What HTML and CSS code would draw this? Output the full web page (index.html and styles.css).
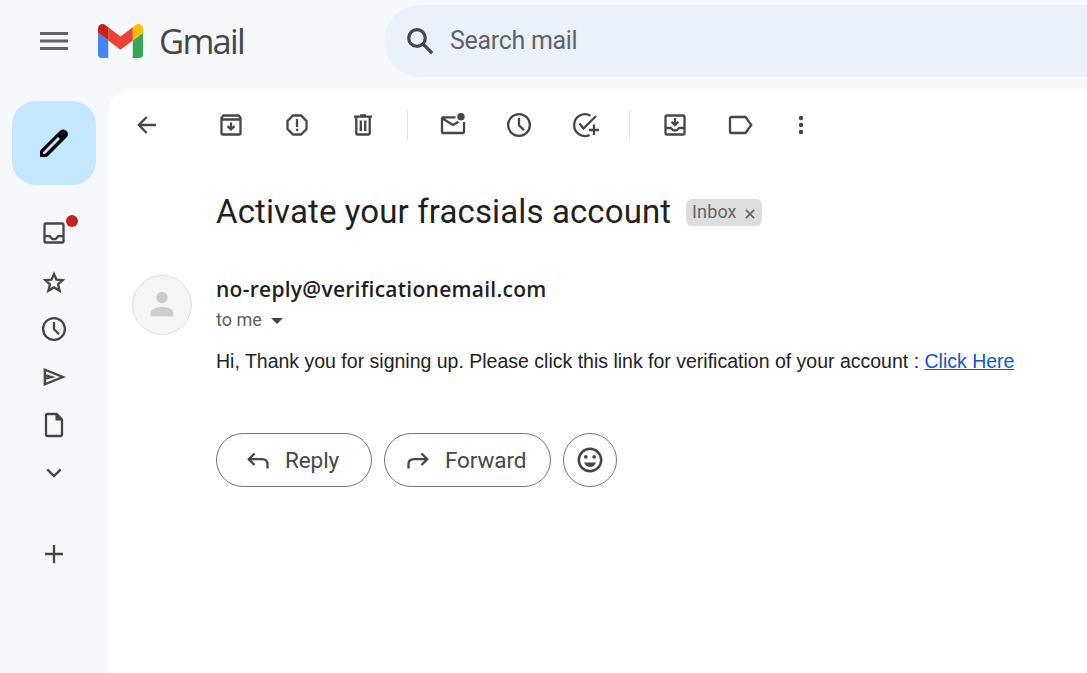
FILE: index.html
```html
<!DOCTYPE html>
<html lang="en">
<head>
<meta charset="utf-8">
<title>Gmail</title>
<link rel="stylesheet" href="styles.css">
</head>
<body>
<header class="topbar">
  <svg class="menu" viewBox="0 0 28 18"><path d="M0 0h28v3H0zM0 7.500h28v3H0zM0 15h28v3H0z"/></svg>
  <svg class="logo" viewBox="52 42 88 66">
    <path fill="#4285f4" d="M58 108h14V74L52 59v43c0 3.32 2.69 6 6 6"/>
    <path fill="#34a853" d="M120 108h14c3.32 0 6-2.69 6-6V59l-20 15"/>
    <path fill="#fbbc04" d="M120 48v26l20-15v-8c0-7.42-8.47-11.65-14.4-7.2"/>
    <path fill="#ea4335" d="M72 74V48l24 18 24-18v26L96 92"/>
    <path fill="#c5221f" d="M52 51v8l20 15V48l-5.6-4.2c-5.94-4.45-14.4-.22-14.4 7.2"/>
  </svg>
  <span class="brand">Gmail</span>
  <div class="search">
    <svg class="search-icon" viewBox="0 0 27 27"><circle cx="10" cy="10" r="8.3"/><path d="M16 16l9.2 9.2"/></svg>
    <span class="search-text">Search mail</span>
  </div>
</header>
<div class="layout">
  <nav class="rail">
    <div class="compose"><svg class="icon" viewBox="-15 -15 30 30"><path class="solid" fill-rule="evenodd" d="M-14 7.800L5.200-11.400Q8.800-15.200 12.200-12.200Q15.800-8.800 12.200-5.200L-7 14H-14ZM-11 9.200V11H-8.900L6-4L4-6Z"/></svg></div>
    <div class="nav-item"><svg class="icon" viewBox="-15 -15 30 30"><rect x="-9.500" y="-9.500" width="19" height="19" rx="1.500"/><path d="M-9.500 3.200H-4Q-2.500 6.200 0 6.200T4 3.200H9.500"/></svg><span class="badge"></span></div>
    <div class="nav-item"><svg class="icon" viewBox="-15 -16.500 30 30"><path d="M0-8.500L2.500-2.900L8.700-2.400L4 1.900L5.600 8.300L0 4.900L-5.600 8.300L-4 1.900L-8.700-2.400L-2.500-2.900Z"/></svg></div>
    <div class="nav-item"><svg class="icon" viewBox="-15 -15 30 30"><circle r="10.900"/><path d="M0-7V.3L5 5.200"/></svg></div>
    <div class="nav-item"><svg class="icon" viewBox="-15 -15 30 30"><path d="M-9.200-7.200V7.200L8.800 0ZM-8.500-1.700L-2.500 0L-8.500 1.700"/></svg></div>
    <div class="nav-item"><svg class="icon" viewBox="-15 -15 30 30"><path d="M2.500-11H-6.500Q-8-11-8-9.500V9.500Q-8 11-6.500 11H6.500Q8 11 8 9.500V-5Z"/><path class="solid" d="M1.500-12H3L9-6V-4.500H1.500Z"/></svg></div>
    <div class="nav-item"><svg class="icon" viewBox="-15 -15 30 30"><path d="M-6.700-3.600L0 3.100L6.700-3.600"/></svg></div>
    <div class="nav-item add"><svg class="icon" viewBox="-15 -15 30 30"><path d="M-9 0H9M0-9V9"/></svg></div>
  </nav>
  <main class="mail">
    <div class="toolbar">
      <div class="tool back"><svg class="icon" viewBox="-15 -15 30 30"><path d="M9 0H-7M-.3-8L-8.200 0L-.3 8"/></svg></div>
      <div class="tool"><svg class="icon" viewBox="-15 -15 30 30"><path d="M-9.500-7.200L-7.500-9.500H7.500L9.500-7.200V8Q9.500 9.500 8 9.500H-8Q-9.500 9.500-9.500 8ZM-9.500-5.500H9.500M0-2.500V4M-3.500 1.200L0 4.500L3.500 1.200"/></svg></div>
      <div class="tool"><svg class="icon" viewBox="-15 -15 30 30"><path d="M-4-9.500H4L9.500-4V4L4 9.500H-4L-9.500 4V-4ZM0-6V2M0 3.700V5.900"/></svg></div>
      <div class="tool"><svg class="icon" viewBox="-15 -15 30 30"><path d="M-9-8.300H9M-3-9.600H3M-6.700-8V8Q-6.700 9.500-5.200 9.500H5.200Q6.700 9.500 6.700 8V-8M-2.200-4.500V6M2.200-4.500V6"/></svg></div>
      <div class="separator"></div>
      <div class="tool"><svg class="icon" viewBox="-15 -15 30 30"><path d="M2.500-7.700H-10Q-11-7.700-11-6.700V7Q-11 8-10 8H10Q11 8 11 7V-3M-10.500-6.500L0 0L5.500-3.300"/><circle class="solid" cx="8" cy="-8.200" r="3.700"/></svg></div>
      <div class="tool"><svg class="icon" viewBox="-15 -15 30 30"><circle r="10.900"/><path d="M0-7V.3L5 5.200"/></svg></div>
      <div class="tool"><svg class="icon" viewBox="-15 -15 30 30"><path d="M5.500-9.300A10.900 10.900 0 1 0 4.700 10M-5.500-1.500L-1.500 3.500L11-9M9-.5V10M4 5H14"/></svg></div>
      <div class="separator"></div>
      <div class="tool"><svg class="icon" viewBox="-15 -15 30 30"><rect x="-9.500" y="-9.500" width="19" height="19" rx="1.500"/><path d="M-9.500 3H-4Q-2.500 5.500 0 5.500T4 3H9.500M0-7V0M-3.500-3.300L0 .2L3.500-3.300"/></svg></div>
      <div class="tool"><svg class="icon" viewBox="-15 -15 30 30"><path d="M-9.500-8H4.500L10.300 0L4.500 8H-9.500Q-11 8-11 6.500V-6.500Q-11-8-9.500-8Z"/></svg></div>
      <div class="tool more"><svg class="icon" viewBox="-15 -15 30 30"><g class="solid"><circle cy="-7" r="2.200"/><circle r="2.200"/><circle cy="7" r="2.200"/></g></svg></div>
    </div>
    <div class="subject">
      <h1 class="subject-text">Activate your fracsials account</h1>
      <span class="label"><span class="label-text">Inbox</span><svg class="label-close" viewBox="0 0 10 10"><path d="M.8.8l8.400 8.400M9.200.8L.8 9.200"/></svg></span>
    </div>
    <article class="message">
      <svg class="avatar" viewBox="0 0 60 60"><circle class="avatar-bg" cx="30" cy="30" r="29.500"/><circle class="person" cx="30" cy="22.500" r="5.700"/><path class="person" d="M18.700 41.300V38C18.700 30 41.300 30 41.300 38V41.300Z"/></svg>
      <div class="content">
        <div class="sender"><span>no-reply@verificationemail.com</span></div>
        <div class="recipient"><span class="to">to me</span><svg class="caret" viewBox="0 0 12 6"><path d="M0 0H12L6 6Z"/></svg></div>
        <p class="body-text"><span>Hi, Thank you for signing up. Please click this link for verification of your account : <a class="link" href="#">Click Here</a></span></p>
        <div class="actions">
          <div class="button reply"><svg class="icon" viewBox="-15 -15 30 30"><path d="M-3.500-6.500L-9.200-.8L-3.500 5M-9-.8H4Q9.500-.8 9.500 4.500V8.500"/></svg><span>Reply</span></div>
          <div class="button forward"><svg class="icon" viewBox="-15 -15 30 30"><path d="M3.500-6.500L9.200-.8L3.500 5M9-.8H-4Q-9.500-.8-9.500 4.500V8.500"/></svg><span>Forward</span></div>
          <div class="button emoji"><svg class="icon" viewBox="-15 -15 30 30"><circle class="face" r="11.200"/><g class="solid"><circle cx="-4.200" cy="-3.200" r="1.900"/><circle cx="4.200" cy="-3.200" r="1.900"/><path d="M-6 2.500H6Q4 7-0 7T-6 2.500Z"/></g></svg></div>
        </div>
      </div>
    </article>
  </main>
</div>
</body>
</html>
```
FILE: styles.css
```css
* { box-sizing: border-box; }
body {
  margin: 0;
  height: 673px;
  overflow: hidden;
  display: flex;
  flex-direction: column;
  background: #f6f8fc;
  color: #444746;
  font-family: Roboto, "Liberation Sans", sans-serif;
}
svg { display: block; flex: none; }
span, h1 { white-space: nowrap; }
.icon { width: 30px; height: 30px; fill: none; stroke: #444746; stroke-width: 2.3; }
.icon .solid { fill: #444746; stroke: none; }
.topbar { flex: none; height: 89px; display: flex; padding-left: 40px; }
.menu { width: 28px; height: 18px; margin-top: 32px; fill: #5f6368; }
.logo { width: 45px; height: 34px; margin: 24px 0 0 29.500px; }
.brand {
  width: 86px;
  margin: 19px 0 0 16.500px;
  font: 34.500px/44px "Open Sans", sans-serif;
  letter-spacing: -1.700px;
}
.search {
  flex: 1;
  height: 72px;
  margin: 5px 0 0 139px;
  padding-left: 22px;
  display: flex;
  background: #eaf1fb;
  border-radius: 36px 0 0 36px;
}
.search-icon { width: 27px; height: 27px; margin: 22.500px 0 0 .5px; fill: none; stroke: #444746; stroke-width: 3.200; }
.search-text { margin: 20px 0 0 16.500px; font-size: 25px; line-height: 32px; letter-spacing: -.3px; color: #5f6368; }
.layout { flex: 1; display: flex; min-height: 0; }
.rail { width: 108px; flex: none; padding-top: 12px; display: flex; flex-direction: column; align-items: center; }
.compose {
  flex: none;
  width: 84px;
  height: 84px;
  margin-bottom: 24px;
  display: grid;
  place-items: center;
  background: #c2e7ff;
  border-radius: 24px;
}
.compose .icon .solid { fill: #000; }
.nav-item { position: relative; flex: none; width: 84px; height: 48px; display: grid; place-items: center; }
.badge { position: absolute; left: 54px; top: 6px; width: 12px; height: 12px; border-radius: 50%; background: #c5221f; }
.add { margin-top: 33px; }
.mail { flex: 1; min-width: 0; background: #fff; border-top-left-radius: 24px; }
.toolbar { height: 72px; padding-left: 6px; display: flex; align-items: center; }
.tool { width: 66px; flex: none; display: grid; place-items: center; }
.back { margin-right: 18px; }
.more { width: 54px; }
.separator { width: 1px; height: 30px; margin: 0 12px 0 11px; background: #e3e5e8; }
.subject { height: 52px; margin: 25px 0 0 108px; display: flex; align-items: center; }
.subject-text {
  width: 455px;
  margin: 0;
  color: #1f1f1f;
  font-size: 33px;
  font-weight: 400;
  line-height: 44px;
  letter-spacing: .120px;
}
.label {
  width: 76px;
  height: 27px;
  margin: 0 0 0 15px;
  padding-left: 6px;
  display: flex;
  align-items: center;
  background: #ddd;
  border-radius: 6px;
  color: #666;
}
.label-text { width: 53px; font-size: 18px; line-height: 26px; letter-spacing: .15px; }
.label-close { width: 10px; height: 10px; margin-top: 3px; fill: none; stroke: #666; stroke-width: 1.700; }
.message { display: flex; padding: 37px 0 0 24px; }
.avatar { width: 60px; height: 60px; }
.avatar-bg { fill: #f5f5f5; stroke: #e0e0e0; }
.person { fill: #ccc; }
.content { margin-left: 24px; }
.sender { height: 30px; color: #1f1f1f; font: 600 21px/28px "Open Sans", sans-serif; letter-spacing: .260px; }
.recipient { height: 30px; display: flex; align-items: center; color: #5e5e5e; }
.to { width: 55px; font-size: 18px; line-height: 30px; }
.caret { width: 12px; height: 6px; margin-top: 1px; fill: #444746; }
.body-text { height: 30px; margin: 11px 0 0; color: #222; font: 19.500px/30px "Liberation Sans", sans-serif; }
.link { color: #15c; text-decoration: underline; }
.actions { display: flex; gap: 12px; margin-top: 57px; }
.button {
  height: 54px;
  display: flex;
  align-items: center;
  border: 1px solid #747775;
  border-radius: 27px;
  font-size: 22.500px;
  line-height: 32px;
}
.button span { margin-left: 12px; letter-spacing: -.1px; }
.reply { width: 156px; padding-left: 26px; }
.forward { width: 167px; padding-left: 18px; }
.emoji { width: 54px; justify-content: center; }
.face { stroke-width: 2.500; }
```
